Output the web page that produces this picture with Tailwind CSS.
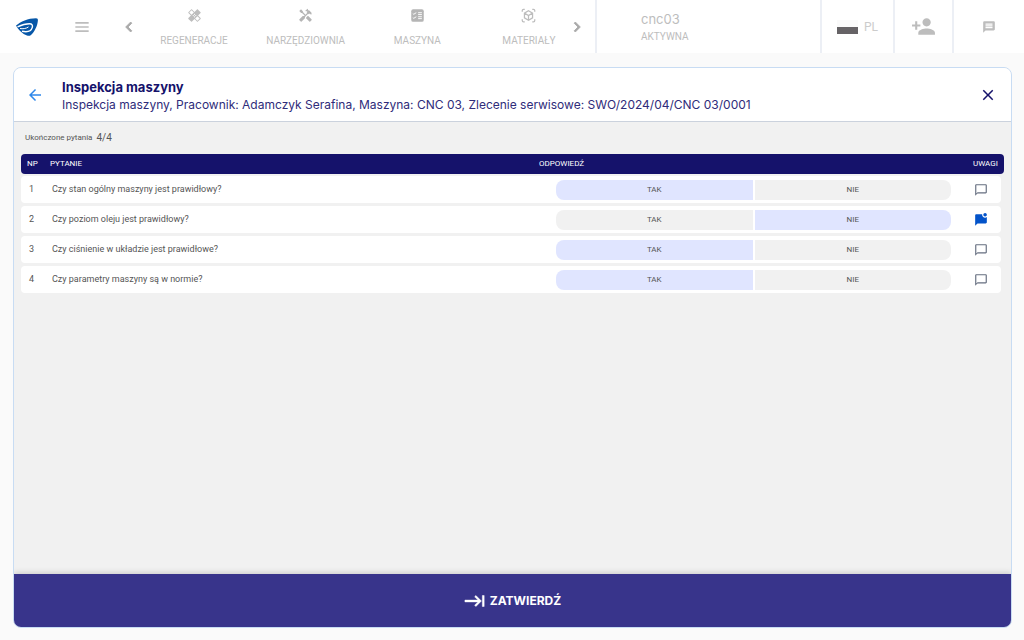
<!DOCTYPE html>
<html lang="pl">
<head>
<meta charset="utf-8">
<meta name="viewport" content="width=device-width, initial-scale=1">
<title>Inspekcja maszyny</title>
<script src="https://cdn.jsdelivr.net/npm/@tailwindcss/browser@4"></script>
</head>
<body class="flex min-h-screen flex-col bg-[#fafafa] font-['Roboto',sans-serif] text-[#555]">
<svg class="hidden" aria-hidden="true">
  <symbol id="comment" viewBox="0 0 24 24"><path d="M20 2H4c-1.1 0-2 .9-2 2v18l4-4h14c1.1 0 2-.9 2-2V4c0-1.1-.9-2-2-2zm0 14H6l-2 2V4h16v12z"/></symbol>
</svg>

<header class="flex h-[53px] shrink-0 items-stretch bg-white text-[#bdbdbd]">
  <a href="#" aria-label="Strona główna" class="flex w-[54px] items-center justify-center">
    <svg class="h-[18px] w-[22px]" viewBox="0 0 22 18">
      <path fill="#0757a8" d="M0 7.600C4.500 3.500 12 .3 20 .2c1.500 0 2 .8 1.900 2.200C21.500 8 18.500 13.500 15 17c-1 .9-2.500 1-4 .6C6.500 16 2.500 12 0 7.600z"/>
      <path fill="none" stroke="#fff" stroke-width="1.400" d="M1.500 8.800C6 6.800 10 5.800 13.500 5.800c2.600 0 3.400 1.500 2.800 3.600-1.100 3.800-5.300 5-10.300 3.900"/>
      <path fill="none" stroke="#fff" stroke-width="1" d="M4 10.500c2.500.5 6 .3 8.500-1.600"/>
    </svg>
  </a>
  <button aria-label="Menu" class="flex w-14 items-center justify-center">
    <svg class="size-4" viewBox="0 0 24 24" fill="currentColor"><path d="M2 19.500h20v-2.500H2v2.500zm0-6.200h20v-2.500H2v2.500zm0-8.800v2.500h20V4.500H2z"/></svg>
  </button>
  <button aria-label="Poprzednie" class="ml-2 flex w-[22px] items-center justify-center">
    <svg class="size-5" viewBox="0 0 24 24" fill="#aaa" stroke="#aaa"><path d="M15.410 7.410L14 6l-6 6 6 6 1.410-1.410L10.830 12z"/></svg>
  </button>
  <nav class="flex flex-1 justify-between pl-4 text-[10px] leading-3">
    <a href="#" class="flex w-[76px] flex-col items-center gap-3 pt-2">
      <svg class="size-[15px]" viewBox="0 0 24 24" fill="currentColor"><path d="M17.730 12.020l3.980-3.980c.39-.39.39-1.020 0-1.410l-4.340-4.340c-.39-.39-1.020-.39-1.410 0l-3.980 3.980L8 2.290C7.800 2.100 7.550 2 7.290 2c-.25 0-.51.1-.7.290L2.250 6.630c-.39.39-.39 1.020 0 1.410l3.980 3.980L2.250 16c-.39.39-.39 1.020 0 1.410l4.340 4.340c.39.39 1.020.39 1.410 0l3.980-3.980 3.980 3.980c.2.200.45.290.71.290.26 0 .51-.1.710-.29l4.340-4.340c.39-.39.39-1.020 0-1.410l-3.990-3.980zM12 9c.55 0 1 .45 1 1s-.45 1-1 1-1-.45-1-1 .45-1 1-1zm-4.710 1.960L3.660 7.340l3.630-3.630 3.620 3.620-3.620 3.630zM10 13c-.55 0-1-.45-1-1s.45-1 1-1 1 .45 1 1-.45 1-1 1zm2 2c-.55 0-1-.45-1-1s.45-1 1-1 1 .45 1 1-.45 1-1 1zm2-4c.55 0 1 .45 1 1s-.45 1-1 1-1-.45-1-1 .45-1 1-1zm2.660 9.340l-3.630-3.620 3.630-3.630 3.620 3.620-3.620 3.630z"/></svg>
      REGENERACJE
    </a>
    <a href="#" class="flex w-[76px] flex-col items-center gap-3 pt-2">
      <svg class="size-[15px]" viewBox="0 0 24 24" fill="#b5b5b5"><path d="M21.670 18.170l-5.300-5.300h-.99l-2.540 2.540v.99l5.300 5.300c.39.39 1.020.39 1.410 0l2.120-2.120c.39-.38.39-1.020 0-1.410zM17.340 10.190l1.410-1.410 2.120 2.120c1.170-1.170 1.170-3.070 0-4.240l-3.540-3.540-1.410 1.410V1.710L15.220 1l-3.540 3.540.71.71h2.830l-1.410 1.410 1.060 1.060-2.890 2.890-4.130-4.130V5.060L4.830 2.040 2 4.870 5.030 7.900h1.410l4.130 4.130-.85.850H7.600l-5.300 5.300c-.39.39-.39 1.020 0 1.410l2.120 2.120c.39.39 1.020.39 1.410 0l5.300-5.300v-2.120l5.150-5.150 1.060 1.050z"/></svg>
      NARZĘDZIOWNIA
    </a>
    <a href="#" class="flex w-[76px] flex-col items-center gap-3 pt-2">
      <svg class="size-[15px]" viewBox="0 0 24 24"><rect x="2" y="2" width="20" height="20" rx="3" fill="#b5b5b5"/><path fill="none" stroke="#fff" stroke-width="1.500" d="M4.500 9l1.500 1 4-2.500M13 7.500h6M13 10.500h6M4.500 15.500l1.500 1 4-2.500M13 14h6M13 17h6"/></svg>
      MASZYNA
    </a>
    <a href="#" class="flex w-[76px] flex-col items-center gap-3 pt-2">
      <svg class="size-[15px]" viewBox="0 0 24 24" fill="none" stroke="currentColor" stroke-width="2"><path d="M2 6V4a2 2 0 0 1 2-2h2M18 2h2a2 2 0 0 1 2 2v2M22 18v2a2 2 0 0 1-2 2h-2M6 22H4a2 2 0 0 1-2-2v-2M12 4.500l6.500 3.700v7.600L12 19.500l-6.500-3.700V8.200zM5.500 8.200L12 12l6.500-3.800M12 12v7.500"/></svg>
      MATERIAŁY
    </a>
  </nav>
  <button aria-label="Następne" class="mr-2 flex w-5 items-center justify-center">
    <svg class="size-5" viewBox="0 0 24 24" fill="#aaa" stroke="#aaa"><path d="M10 6L8.590 7.410 13.170 12l-4.580 4.590L10 18l6-6z"/></svg>
  </button>
  <div class="flex w-[225px] flex-col justify-center border-l-2 border-[#eceff5] pl-11">
    <span class="font-['Inter',sans-serif] text-[13px] leading-5">cnc03</span>
    <span class="text-[10px] leading-4">AKTYWNA</span>
  </div>
  <button class="flex w-[73px] items-center justify-center gap-[6px] border-l-2 border-[#eceff5] text-xs text-[#ccc]">
    <span class="flex h-[14px] w-[21px] flex-col bg-[#fafafa]"><span class="mt-auto h-[7px] bg-[#666366]"></span></span>
    PL
  </button>
  <button aria-label="Dodaj pracownika" class="flex w-[59px] items-center justify-center border-l-2 border-[#eceff5]">
    <svg class="size-[25px]" viewBox="0 0 24 24" fill="currentColor"><path d="M15 12c2.210 0 4-1.790 4-4s-1.790-4-4-4-4 1.790-4 4 1.790 4 4 4zm-9-2V7H4v3H1v2h3v3h2v-3h3v-2H6zm9 4c-2.670 0-8 1.340-8 4v2h16v-2c0-2.660-5.330-4-8-4z"/></svg>
  </button>
  <button aria-label="Wiadomości" class="flex w-[72px] items-center justify-center border-l-2 border-[#eceff5]">
    <svg class="size-[14px]" viewBox="0 0 24 24" fill="currentColor"><path d="M20 2H4c-1.100 0-1.990.9-1.990 2L2 22l4-4h14c1.100 0 2-.9 2-2V4c0-1.100-.9-2-2-2zm-2 12H6v-2h12v2zm0-3H6V9h12v2zm0-3H6V6h12v2z"/></svg>
  </button>
</header>

<main class="mt-[14px] mr-3 mb-3 ml-[13px] flex flex-1 flex-col overflow-hidden rounded-lg border border-[#c8dcf3] bg-[#f1f1f1]">
  <div class="flex h-[54px] shrink-0 items-center border-b border-[#cbd2dd] bg-white">
    <button aria-label="Wstecz" class="flex w-[42px] justify-center">
      <svg class="size-[18px]" viewBox="0 0 24 24" fill="#2f88ea"><path d="M20 11H7.830l5.590-5.590L12 4l-8 8 8 8 1.410-1.410L7.830 13H20v-2z"/></svg>
    </button>
    <div class="flex-1 pt-px pl-[6px] font-['Inter',sans-serif] text-[#15126b]">
      <h1 class="text-[13px] leading-[18px] font-bold">Inspekcja maszyny</h1>
      <p class="text-xs leading-[17px] text-[#2f2c7a]">Inspekcja maszyny, Pracownik: Adamczyk Serafina, Maszyna: CNC 03, Zlecenie serwisowe: SWO/2024/04/CNC 03/0001</p>
    </div>
    <button aria-label="Zamknij" class="flex w-[46px] justify-center">
      <svg class="size-[18px]" viewBox="0 0 24 24" fill="#15126b"><path d="M19 6.410L17.590 5 12 10.590 6.410 5 5 6.410 10.590 12 5 17.590 6.410 19 12 13.410 17.590 19 19 17.590 13.410 12z"/></svg>
    </button>
  </div>

  <section class="flex-1 px-[7px] pt-2">
    <p class="flex items-center gap-1 pl-1 text-[8px] leading-4">Ukończone pytania <span class="text-[10px]">4/4</span></p>
    <table class="mt-2 block text-[9px]">
      <thead class="block">
        <tr class="flex h-5 items-center rounded bg-[#15126b] text-left text-[8px] text-white">
          <th class="w-[29px] pl-[6px] font-normal">NP</th>
          <th class="flex-1 font-normal">PYTANIE</th>
          <th class="w-[434px] font-normal">ODPOWIEDŹ</th>
          <th class="w-[31px] font-normal">UWAGI</th>
        </tr>
      </thead>
      <tbody class="mt-[2px] mr-[3px] flex flex-col gap-[3px]">
        <tr class="flex h-[27px] items-center rounded bg-white">
          <td class="w-[31px] pl-2">1</td>
          <td class="flex-1">Czy stan ogólny maszyny jest prawidłowy?</td>
          <td class="flex w-[395px] gap-[2px] text-[8px]"><button aria-pressed="true" class="h-5 flex-1 rounded-l-lg bg-[#e0e5ff]">TAK</button><button aria-pressed="false" class="h-5 flex-1 rounded-r-lg bg-[#f1f1f1]">NIE</button></td>
          <td class="flex w-[50px] justify-center pl-[9px]"><button aria-label="Uwagi 1"><svg class="block size-[14px] fill-[#666f80]"><use href="#comment"/></svg></button></td>
        </tr>
        <tr class="flex h-[27px] items-center rounded bg-white">
          <td class="w-[31px] pl-2">2</td>
          <td class="flex-1">Czy poziom oleju jest prawidłowy?</td>
          <td class="flex w-[395px] gap-[2px] text-[8px]"><button aria-pressed="false" class="h-5 flex-1 rounded-l-lg bg-[#f1f1f1]">TAK</button><button aria-pressed="true" class="h-5 flex-1 rounded-r-lg bg-[#e0e5ff]">NIE</button></td>
          <td class="flex w-[50px] justify-center pl-[9px]"><button aria-label="Uwagi 2"><svg class="block size-[14px] fill-[#0353c9]" viewBox="0 0 24 24"><path d="M22 6.980V16c0 1.100-.9 2-2 2H6l-4 4V4c0-1.100.9-2 2-2h10.100c-.06.320-.1.660-.1 1 0 2.760 2.240 5 5 5 1.130 0 2.160-.39 3-1.020zM16 3c0 1.660 1.340 3 3 3s3-1.340 3-3-1.340-3-3-3-3 1.340-3 3z"/></svg></button></td>
        </tr>
        <tr class="flex h-[27px] items-center rounded bg-white">
          <td class="w-[31px] pl-2">3</td>
          <td class="flex-1">Czy ciśnienie w układzie jest prawidłowe?</td>
          <td class="flex w-[395px] gap-[2px] text-[8px]"><button aria-pressed="true" class="h-5 flex-1 rounded-l-lg bg-[#e0e5ff]">TAK</button><button aria-pressed="false" class="h-5 flex-1 rounded-r-lg bg-[#f1f1f1]">NIE</button></td>
          <td class="flex w-[50px] justify-center pl-[9px]"><button aria-label="Uwagi 3"><svg class="block size-[14px] fill-[#666f80]"><use href="#comment"/></svg></button></td>
        </tr>
        <tr class="flex h-[27px] items-center rounded bg-white">
          <td class="w-[31px] pl-2">4</td>
          <td class="flex-1">Czy parametry maszyny są w normie?</td>
          <td class="flex w-[395px] gap-[2px] text-[8px]"><button aria-pressed="true" class="h-5 flex-1 rounded-l-lg bg-[#e0e5ff]">TAK</button><button aria-pressed="false" class="h-5 flex-1 rounded-r-lg bg-[#f1f1f1]">NIE</button></td>
          <td class="flex w-[50px] justify-center pl-[9px]"><button aria-label="Uwagi 4"><svg class="block size-[14px] fill-[#666f80]"><use href="#comment"/></svg></button></td>
        </tr>
      </tbody>
    </table>
  </section>

  <button class="flex h-[53px] shrink-0 items-center justify-center gap-1 bg-[#38348b] font-['Inter',sans-serif] text-xs font-bold text-white shadow-[0_-2px_5px_#0002]">
    <svg class="size-[22px]" viewBox="0 0 24 24" fill="currentColor" stroke="currentColor" stroke-width="0.500"><path d="M11.590 7.410L15.170 11H1v2h14.170l-3.590 3.590L13 18l6-6-6-6-1.410 1.410zM20 6v12h2V6h-2z"/></svg>
    ZATWIERDŹ
  </button>
</main>
</body>
</html>
